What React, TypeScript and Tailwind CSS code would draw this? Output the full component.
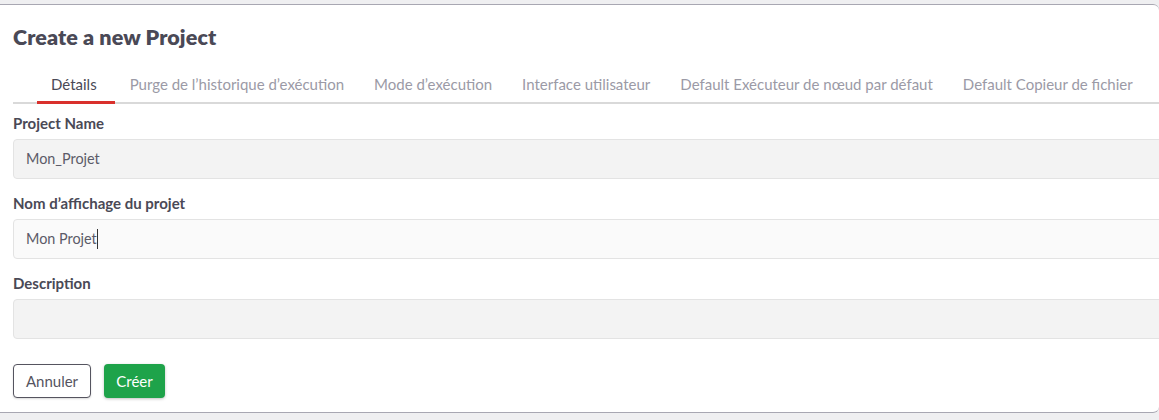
import React from "react";

const tabs = [
  "Détails",
  "Purge de l’historique d’exécution",
  "Mode d’exécution",
  "Interface utilisateur",
  "Default Exécuteur de nœud par défaut",
  "Default Copieur de fichier",
];

export default function App() {
  return (
    <div className="w-[1159px] h-[420px] bg-[#efeff1] pt-[4px] overflow-hidden" style={{ fontFamily: "Lato, 'Noto Sans', sans-serif" }}>
      <div className="bg-white h-[409px] border-t border-b border-[#a8a7b2] rounded-r-[6px] overflow-hidden pl-[13px] flex flex-col">
        <h1 className="mt-[18px] text-[21.5px] leading-[28px] font-extrabold text-[#4a4956] tracking-[0.1px]">
          Create a new Project
        </h1>
        <div className="mt-[16px] flex border-b-2 border-[#d9d9d9] pl-[24px]">
          {tabs.map((t, i) => (
            <div
              key={t}
              className={
                i === 0
                  ? "pl-[14px] pr-[18px] pt-[7px] pb-[7px] leading-[20px] text-[15px] text-[#4a4956] border-b-[3px] border-[#d9302c] -mb-[2px]"
                  : "px-[15px] pt-[7px] pb-[7px] leading-[20px] text-[15px] text-[#9b9aa6] border-b-[3px] border-transparent -mb-[2px]"
              }
            >
              {t}
            </div>
          ))}
        </div>
        <label className="mt-[9px] leading-[20px] text-[15px] font-bold text-[#4a4956]">Project Name</label>
        <div className="mt-[6px] h-[40px] w-[1170px] rounded-[4px] border border-[#e3e3e3] bg-[#f3f3f3] px-[12px] flex items-center text-[14.4px] text-[#5c5b68]">
          Mon_Projet
        </div>
        <label className="mt-[14px] leading-[20px] text-[15px] font-bold text-[#4a4956]">Nom d’affichage du projet</label>
        <div className="mt-[6px] h-[40px] w-[1170px] rounded-[4px] border border-[#e3e3e3] bg-[#fafafa] px-[12px] flex items-center text-[14.4px] text-[#5c5b68]">
          Mon Projet<span className="inline-block w-[1px] h-[20px] bg-[#333]" />
        </div>
        <label className="mt-[14px] leading-[20px] text-[15px] font-bold text-[#4a4956]">Description</label>
        <div className="mt-[6px] h-[40px] w-[1170px] rounded-[4px] border border-[#e3e3e3] bg-[#f3f3f3]" />
        <div className="mt-[25px] flex gap-[13px]">
          <button className="h-[34px] w-[78px] rounded-[4px] border border-[#55545f] bg-white text-[15px] text-[#55545f] shadow-[0_1px_2px_rgba(0,0,0,0.15)]">
            Annuler
          </button>
          <button className="h-[34px] w-[61px] rounded-[4px] bg-[#1ea34a] text-[15px] text-white shadow-[0_1px_3px_rgba(0,0,0,0.25)]">
            Créer
          </button>
        </div>
      </div>
    </div>
  );
}
